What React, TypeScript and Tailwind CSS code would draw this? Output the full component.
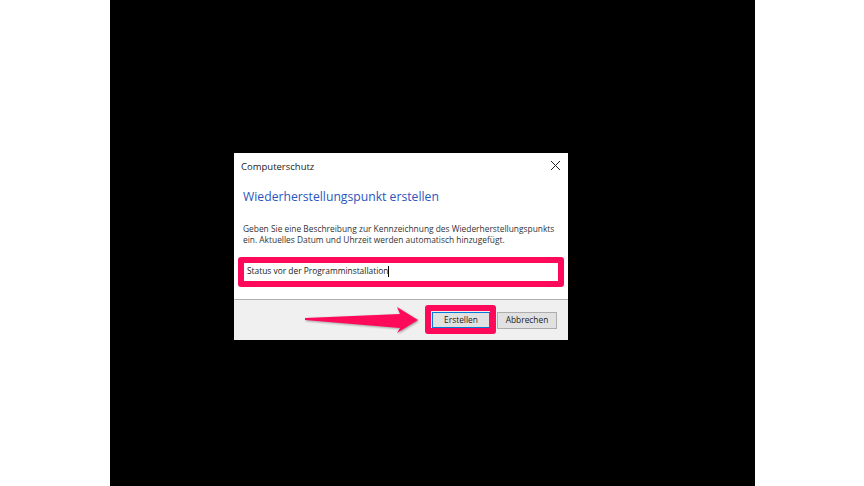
export default function App() {
  return (
    <div className="h-[486px] w-[864px] bg-white overflow-hidden font-['Open_Sans','Noto_Sans',sans-serif]">
      <div className="ml-[110px] h-[486px] w-[645px] bg-black pt-[153px] pl-[124px]">
        <div className="relative w-[334px] h-[187px] bg-white flex flex-col">
          <div className="flex-1 flex flex-col px-[9px]">
            <div className="flex items-center justify-between h-[26px]">
              <span className="text-[9.5px] leading-none text-[#222] -ml-[2px] mt-[1px]">Computerschutz</span>
              <svg width="11" height="11" viewBox="0 0 11 11" className="-mr-[2px] -mt-[1px]"><path d="M1 1 L10 10 M10 1 L1 10" stroke="#222" strokeWidth="1" fill="none" /></svg>
            </div>
            <div className="mt-[9px] text-[12.2px] leading-[17px] text-[#2a55bd]">Wiederherstellungspunkt erstellen</div>
            <div className="mt-[18px] text-[8.4px] leading-[11px] text-[#333] whitespace-nowrap">
              <div>Geben Sie eine Beschreibung zur Kennzeichnung des Wiederherstellungspunkts</div>
              <div>ein. Aktuelles Datum und Uhrzeit werden automatisch hinzugefügt.</div>
            </div>
            <div className="mt-[18px] h-[17px] mx-[1px] flex items-center pl-[3px] text-[8.4px] text-[#222] whitespace-nowrap">
              <span>Status vor der Programminstallation</span>
              <span className="w-px h-[11px] bg-black" />
            </div>
          </div>
          <div className="h-[41px] bg-[#f0f0f0] border-t border-[#b0b0b0] flex justify-end items-start pt-[12px] pr-[11px] gap-[7px]">
            <div className="w-[58px] h-[16px] bg-[#e1e1e1] border border-[#0078d7] flex items-center justify-center text-[8.4px] text-[#222]">Erstellen</div>
            <div className="w-[60px] h-[17px] bg-[#e1e1e1] border border-[#adadad] flex items-center justify-center text-[8.4px] text-[#222]">Abbrechen</div>
          </div>
          <div className="absolute left-[4px] top-[104px] w-[326px] h-[30px] rounded-[3px] border-[6px] border-[#ff0a5a]" />
          <div className="absolute left-[191px] top-[152px] w-[71px] h-[29px] rounded-[3px] border-[6px] border-[#ff0a5a]" />
          <svg className="absolute left-[70px] top-[152px] drop-shadow-[1px_1px_1px_rgba(0,0,0,0.35)]" width="118" height="32" viewBox="0 0 118 32">
            <path d="M1 13 L96 9 L93 2 L114 15 L93 28 L96 23 L1 15 Z" fill="#ff0a5a" />
          </svg>
        </div>
      </div>
    </div>
  );
}
